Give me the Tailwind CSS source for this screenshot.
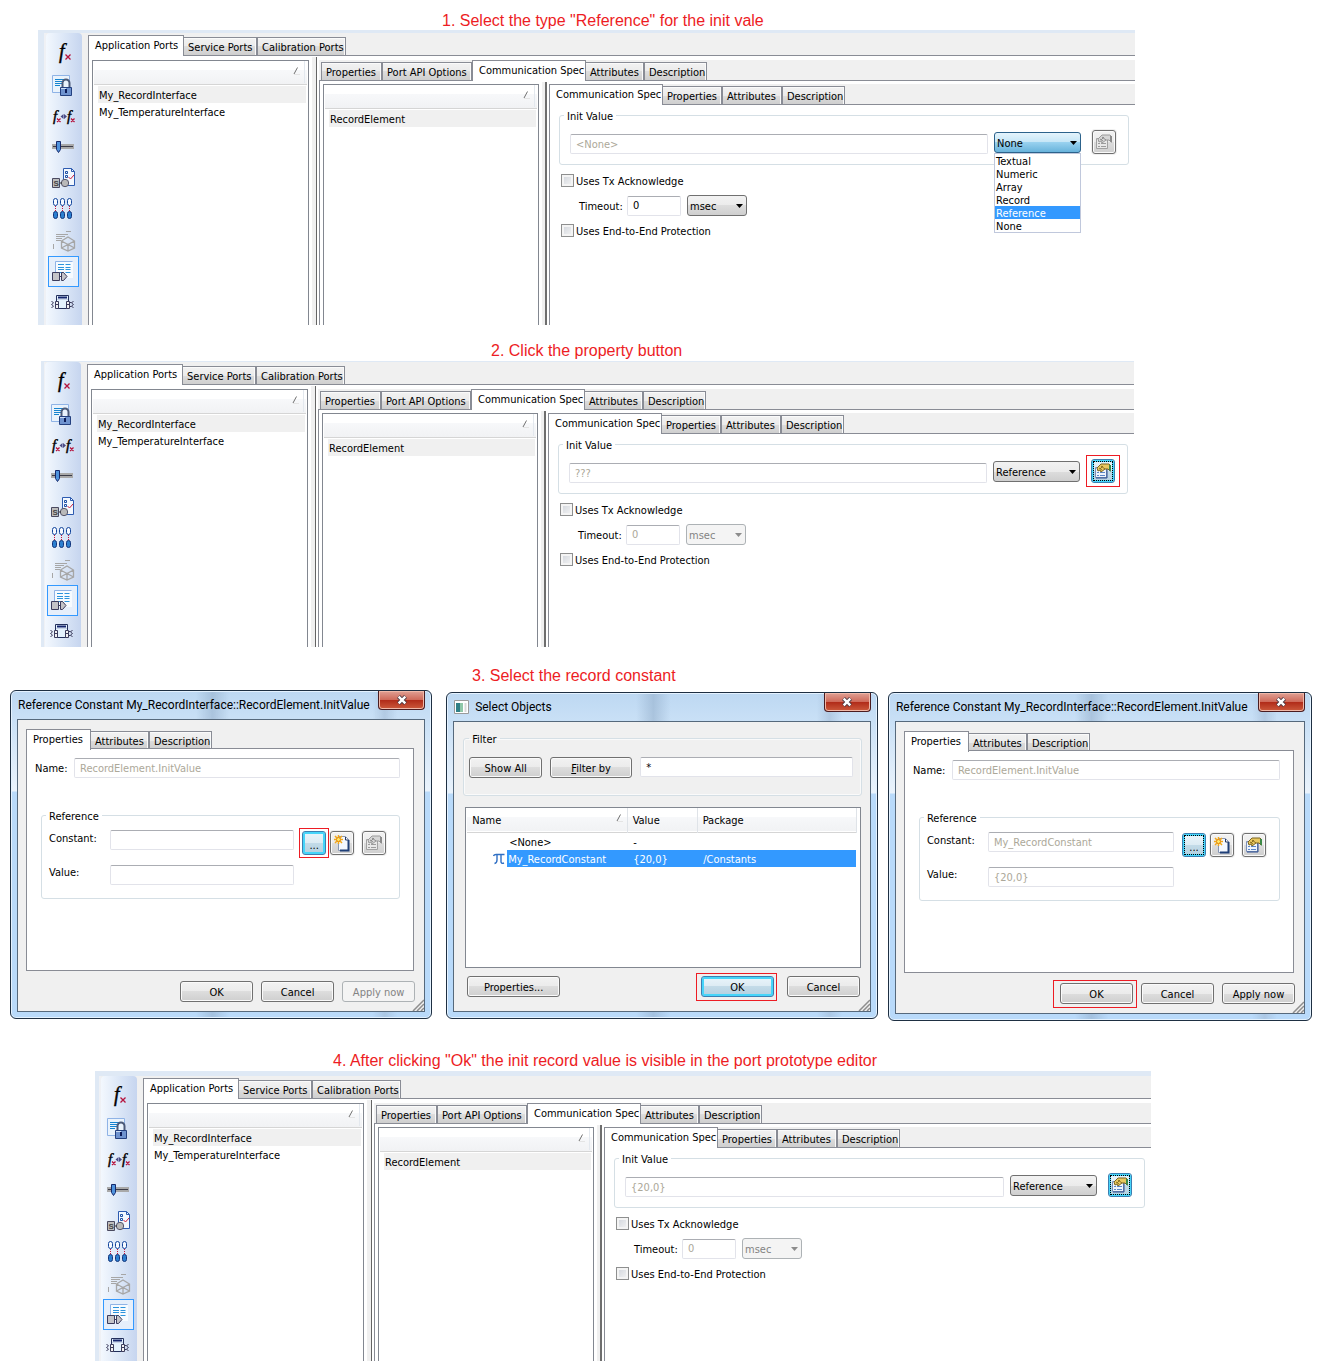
<!DOCTYPE html>
<html lang="en">
<head>
<meta charset="utf-8">
<meta name="viewport" content="width=device-width, initial-scale=1">
<title>Setting an init value with a record constant</title>
<script src="https://cdn.jsdelivr.net/npm/@tailwindcss/browser@4"></script>
</head>
<body class="bg-white text-black text-[11px] leading-[13px] font-['DejaVu_Sans_Condensed',Tahoma,sans-serif]">

<!-- Icon library -->
<svg class="hidden" aria-hidden="true">
  <symbol id="i-fx" viewBox="0 0 31 31">
    <text x="11" y="19" font-family="Liberation Serif, serif" font-style="italic" font-size="20" stroke="#000" stroke-width="0.4">f</text>
    <path d="M17.500 15.500l5 5M22.500 15.500l-5 5" stroke="#b5123c" stroke-width="1.300" fill="none"/>
  </symbol>
  <symbol id="i-lock" viewBox="0 0 31 31">
    <path d="M4.500 5.500h17v17h-17z" fill="#eaf3fc" stroke="#8fb3e6"/>
    <path d="M7 9.500h12M7 11.500h9M7 13.500h7M7 15.500h5" stroke="#1684cf"/>
    <path d="M14.500 17v-4a3.500 3.500 0 0 1 7 0v4" fill="none" stroke="#4c5a78" stroke-width="2"/>
    <path d="M12.500 17.500h11v8h-11z" fill="#6f93cf" stroke="#24407f"/>
    <path d="M13 18.500h5" stroke="#cfe0f6"/><path d="M17 19h2v4h-2z" fill="#0c1c58"/>
  </symbol>
  <symbol id="i-fxfx" viewBox="0 0 31 31">
    <text x="5" y="20" font-family="Liberation Serif, serif" font-style="italic" font-size="15" stroke="#000" stroke-width="0.4">f</text>
    <text x="19" y="20" font-family="Liberation Serif, serif" font-style="italic" font-size="15" stroke="#000" stroke-width="0.4">f</text>
    <path d="M9 17.500l3.500 3.500M12.500 17.500l-3.500 3.500M23 17.500l3.500 3.500M26.500 17.500l-3.500 3.500" stroke="#b5123c" stroke-width="1.300"/>
    <path d="M12.500 15.500l3-2.500v5zM19 15.500l-3-2.500v5z" fill="#4b4b86"/>
  </symbol>
  <symbol id="i-slider" viewBox="0 0 31 31">
    <path d="M4 12h22v5H4z" fill="#a9a9a9"/><path d="M5 14.500h20" stroke="#3c3c48"/>
    <path d="M8.500 9.500h4v8l-2 3-2-3z" fill="#4f93dd" stroke="#162a6c"/>
  </symbol>
  <symbol id="i-check" viewBox="0 0 31 31">
    <path d="M15.500 5.500h8l3 3v14h-11z" fill="#f3f8fe" stroke="#2d5bb0"/><path d="M23.500 5.500v3h3" fill="none" stroke="#2d5bb0"/>
    <path d="M17.500 8.500h2v2h-2zM17.500 12.500h2v2h-2z" fill="none" stroke="#1c4fa5"/>
    <path d="M20.500 14l2 2 3.500-4" fill="none" stroke="#d0213f"/>
    <circle cx="17" cy="20" r="3.700" fill="#b9b9b9" stroke="#55556a"/><path d="M12 20h2" stroke="#333"/>
    <path d="M4.500 15.500h7v9h-7z" fill="#bdbdbd" stroke="#4a4a60"/>
    <text x="5.500" y="23" font-family="Liberation Sans, sans-serif" font-weight="bold" font-size="8" fill="#444">S</text>
  </symbol>
  <symbol id="i-links" viewBox="0 0 31 31">
    <g fill="#f6faff" stroke="#12459c"><rect x="5.500" y="4.500" width="4" height="7" rx="2"/><rect x="12.500" y="4.500" width="4" height="7" rx="2"/><rect x="19.500" y="4.500" width="4" height="7" rx="2"/></g>
    <path d="M7.500 12v5M14.500 12v5M21.500 12v5" stroke="#c4143c" stroke-dasharray="1 1"/>
    <g fill="#2b7fd0" stroke="#12357c"><rect x="5.500" y="17.500" width="4" height="7" rx="2"/><rect x="12.500" y="17.500" width="4" height="7" rx="2"/><rect x="19.500" y="17.500" width="4" height="7" rx="2"/></g>
  </symbol>
  <symbol id="i-cube" viewBox="0 0 31 31">
    <g fill="none" stroke="#a6a6a6"><path d="M18 6.500h5M8 9.500h12M8 11.500h9M8 13.500h6M8 15.500h5M5.500 19v5"/>
    <path d="M13.500 16l6.500-4 6.500 4v7l-6.500 3-6.500-3zM13.500 16l6.500 3.500 6.500-3.500M20 19.500v7M13.500 23l6.500-3.500 6.500 3.500" stroke-width="1.300"/></g>
  </symbol>
  <symbol id="i-ports" viewBox="0 0 31 31">
    <path d="M7.500 22.500v-17h17" fill="none" stroke="#8fb3e6"/><path d="M8 6h17v16H8z" fill="#f7fbff"/>
    <path d="M10 8.500h6M17.500 8.500h5M10 11.500h6M17.500 11.500h5M10 13.500h6M17.500 13.500h5M10 16.500h6M17.500 16.500h5" stroke="#2c93dc"/>
    <path d="M4.500 16.500h7v8h-7z" fill="#c4c4c8" stroke="#3c3c5c"/><path d="M12 20.500h2" stroke="#3c3c5c"/>
    <path d="M13.500 16.500h2l3.500 4-3.500 4h-2z" fill="#c4c4c8" stroke="#3c3c5c"/>
  </symbol>
  <symbol id="i-module" viewBox="0 0 31 31">
    <path d="M8.500 8.500h12v13h-12z" fill="#e4f2fd" stroke="#23305c"/><path d="M10 10.500h9" stroke="#16266e" stroke-width="2"/><path d="M9 12.500h11" stroke="#c8d4e8"/>
    <path d="M7.500 14.500h3v7h-3zM18.500 14.500h3v7h-3zM7.500 17.500h3M18.500 17.500h3" fill="#f2f2f2" stroke="#3c3c5c"/>
    <path d="M3.500 14l2 2-2 1.500 2 1.500-2 2M25.500 14l-2 2 2 1.500-2 1.500 2 2M22 15.500h1.500M22 19.500h1.500" fill="none" stroke="#3c3c5c"/>
  </symbol>
  <symbol id="i-prop" viewBox="0 0 24 24">
    <path d="M4.500 8.500h11v10h-11z" fill="#eef4fc" stroke="#7a8fb8"/><path d="M16 10v9H5" fill="none" stroke="#2f4f8f"/>
    <path d="M6 13.500h2M9 13.500h5M6 16.500h2M9 16.500h5" stroke="#5b87c8"/>
    <path d="M6 9l4-4h8l1 1v6l-2-2h-3l-4 3-1-2-2 1z" fill="#e8c860" stroke="#7b6420"/><path d="M8 9l3 2M10 7l4 3M9 10l3-3" stroke="#8a6f20"/>
    <path d="M18 6h2v7l-2-2z" fill="#3c8a48"/>
  </symbol>
  <symbol id="i-prop-off" viewBox="0 0 24 24">
    <path d="M4.500 8.500h11v10h-11z" fill="#e8e8e8" stroke="#a2a2a2"/>
    <path d="M6 13.500h2M9 13.500h5M6 16.500h2M9 16.500h5" stroke="#9c9c9c"/>
    <path d="M6 9l4-4h8l1 1v6l-2-2h-3l-4 3-1-2-2 1z" fill="#d6d6d6" stroke="#9a9a9a"/><path d="M8 9l3 2M10 7l4 3M9 10l3-3" stroke="#8c8c8c"/>
    <path d="M18 6h2v7l-2-2z" fill="#8c8c8c"/>
  </symbol>
  <symbol id="i-new" viewBox="0 0 24 24">
    <path d="M8.500 5.500h7l3 3v11h-10z" fill="#f4f8ff" stroke="#8796b4"/><path d="M15.500 6v3h3" fill="none" stroke="#24375f"/><path d="M18.500 9v10.500H10" fill="none" stroke="#1f3f78" stroke-width="2"/>
    <path d="M8.500 4v9M4 8.500h9M5 5l7 7M12 5l-7 7" stroke="#f2a81a" stroke-width="1.500"/><circle cx="8.500" cy="8.500" r="2" fill="#ffe868" stroke="#e58a10"/>
  </symbol>
  <symbol id="i-close" viewBox="0 0 12 10">
    <path d="M2.500 1.500l7 7M9.500 1.500l-7 7" stroke="#4a3a44" stroke-width="4.200" fill="none"/><path d="M2.700 1.700l6.600 6.600M9.300 1.700l-6.600 6.600" stroke="#fff" stroke-width="2.400" fill="none"/>
  </symbol>
  <symbol id="i-sort" viewBox="0 0 8 8"><path d="M1 7L4.500 0.500" stroke="#707070" fill="none"/><path d="M1 7.500h6" stroke="#e4e4e4"/></symbol>
  <symbol id="i-down" viewBox="0 0 7 4"><path d="M0 0h7L3.500 4z" fill="currentColor"/></symbol>
  <symbol id="i-pi" viewBox="0 0 12 12"><path d="M0.500 3Q1 1.500 3 1.500h8.500M4 2v5q0 3-2.500 3.500M8 2v7q0.500 2 3 1" fill="none" stroke="#2f6fc4" stroke-width="1.400"/></symbol>
  <symbol id="i-grip" viewBox="0 0 12 12"><path d="M1 12L12 1M5 12l7-7M9 12l3-3" stroke="#8e8e8e" stroke-width="1.500"/></symbol>
  <symbol id="i-window" viewBox="0 0 15 14"><path d="M0.500 0.500h14v13H0.500z" fill="#fff" stroke="#9a9a9a"/><path d="M2 3h4v9H2z" fill="#2f7f86"/><path d="M6 3h3v9H6z" fill="#8fc7a8"/><path d="M10.500 3h2v9h-2z" fill="#d8d8d8"/></symbol>
</svg>

<main id="guide" class="flex flex-col"></main>

<script>
const icon = (name, cls) => `<svg class="${cls}" aria-hidden="true"><use href="#${name}"/></svg>`;

const BTN = "h-[21px] rounded-[3px] border border-[#707070] bg-[linear-gradient(to_bottom,#f2f2f2,#ebebeb_50%,#dddddd_50%,#cfcfcf)] pt-[2px] shadow-[inset_0_0_0_1px_#fafafa]";
const BTN_OFF = "h-[21px] rounded-[3px] border border-[#adb2b5] bg-[#f4f4f4] pt-[2px] text-[#838383]";
const BTN_MAIN = "h-[21px] rounded-[3px] border border-[#3c7fb1] bg-[linear-gradient(to_bottom,#eaf5fb,#dcebf3_50%,#c3dbe8_50%,#b3d0e0)] pt-[2px] shadow-[inset_0_0_0_2px_#46d5fa]";
const TOOL = "relative flex size-6 shrink-0 items-center justify-center rounded-[3px] border border-[#707070] bg-[linear-gradient(to_bottom,#f2f2f2,#ebebeb_50%,#dddddd_50%,#cfcfcf)] shadow-[inset_0_0_0_1px_#fafafa,0_0_0_1px_#f0f0f0]";
const TOOL_MAIN = "relative flex size-6 shrink-0 items-center justify-center rounded-[3px] border border-[#3c7fb1] bg-[linear-gradient(to_bottom,#eaf5fb,#dcebf3_50%,#c3dbe8_50%,#b3d0e0)] shadow-[inset_0_0_0_2px_#46d5fa]";
const FOCUS = '<span class="absolute inset-[1px] border border-dotted border-black"></span>';
const FIELD = "h-5 min-w-0 rounded-[2px] border border-[#e2e3ea] border-t-[#abadb3] bg-white px-[5px] disabled:text-[#aca899]";
const CHECK = "size-[13px] appearance-none border border-[#8e8f8f] bg-[linear-gradient(135deg,#cfd3da,#f6f6f6)] shadow-[inset_0_0_0_2px_#f4f4f4]";

const tabs = (list, active) => list.map(([label, w], i) => i === active
  ? `<button role="tab" aria-selected="true" class="z-1 -mb-px h-[21px] ${w} shrink-0 border border-b-0 border-[#898c95] bg-white pb-px pl-[6px] text-left whitespace-nowrap">${label}</button>`
  : `<button role="tab" aria-selected="false" class="h-[18px] ${w} shrink-0 border border-b-0 ${i === active + 1 ? "border-l-0" : ""} border-[#898c95] bg-[linear-gradient(to_bottom,#f2f2f2,#ebebeb_50%,#dddddd_50%,#cfcfcf)] pt-[2px] pl-[4px] text-left whitespace-nowrap shadow-[inset_-1px_1px_0_0_#fafafa]">${label}</button>`).join("");

const picker = (id, label, w, value, o = {}) => `
  <div class="relative ${w} shrink-0">
    <select id="${id}" aria-label="${label}" ${o.off ? "disabled" : ""} class="block h-[21px] w-full appearance-none rounded-[3px] border px-[2px] pt-px ${o.off ? "border-[#adb2b5] bg-[#f4f4f4] text-[#838383]" : o.open ? "border-[#2c628b] bg-[linear-gradient(to_bottom,#e5f4fc,#c4e5f6_50%,#98d1ef_50%,#68b3db)]" : "border-[#707070] bg-[linear-gradient(to_bottom,#f2f2f2,#ebebeb_50%,#dddddd_50%,#cfcfcf)]"}"><option>${value}</option></select>
    ${icon("i-down", o.off ? "pointer-events-none absolute top-[9px] right-[4px] h-1 w-[7px] text-[#8c8c8c]" : "pointer-events-none absolute top-[9px] right-[4px] h-1 w-[7px] text-black")}
    ${o.open ? `<ul role="listbox" class="absolute top-full left-0 z-10 w-full border border-[#c0c8dc] bg-white leading-[15px]">${["Textual", "Numeric", "Array", "Record", "Reference", "None"].map(t =>
      `<li role="option" class="h-[13px] pl-px ${t === "Reference" ? "bg-[#3399ff] text-white" : ""}">${t}</li>`).join("")}</ul>` : ""}
  </div>`;

const listBox = (w, rows) => `
  <div class="${w} shrink-0 border border-b-0 border-[#828790] bg-white px-px">
    <div class="flex h-6 items-start justify-end border-b border-[#d5d5d5] bg-[linear-gradient(to_bottom,#ffffff_40%,#f7f8fa_40%,#f1f2f4)] pr-[2px]">
      ${icon("i-sort", "mt-[6px] mr-[3px] size-2")}<span class="h-[22px] w-px bg-[#e3e8ee]"></span>
    </div>
    <ul class="pt-px pr-px pl-[4px]">${rows.map((r, i) => `<li class="h-[17px] pt-[3px] pl-px ${i === 0 ? "bg-[#f0f0f0]" : ""}">${r}</li>`).join("")}</ul>
  </div>`;

const editor = o => `
<section class="flex ${o.box} border-[#dfe9f5] bg-[#f0f0f0]">
  <div class="${o.edge} shrink-0 bg-[linear-gradient(to_right,#dfe9f5_70%,#eff1f5_70%)]"></div>
  <nav class="flex w-9 shrink-0 flex-col rounded-t-[4px] bg-[linear-gradient(to_right,#f3f8fe,#dce7f7_50%,#c6d5ef)] pt-[6px] pl-[2px]">
    ${["fx", "lock", "fxfx", "slider", "check", "links", "cube", "ports", "module"].map(n =>
      `<button aria-label="${n}" class="size-[31px] ${n === "ports" ? "border border-[#3399ff] bg-[#e6effb]" : "border border-transparent"}">${icon("i-" + n, "-m-px size-[31px]")}</button>`).join("")}
  </nav>
  <div class="w-[6px] shrink-0"></div>
  <div class="flex min-w-0 flex-1 flex-col">
    <div role="tablist" class="flex h-[23px] items-end border-b border-[#898c95]">${tabs([["Application Ports", "w-24"], ["Service Ports", "w-[73px]"], ["Calibration Ports", "w-[89px]"]], 0)}</div>
    <div class="flex flex-1 border-l border-[#898c95] bg-white pt-px pl-[3px]">
      <div class="flex pt-[3px]">${listBox("w-[217px]", ["My_RecordInterface", "My_TemperatureInterface"])}</div>
      <div class="ml-[3px] w-[5px] shrink-0 border-r border-[#646464] bg-[#f0f0f0]"></div>
      <div class="flex min-w-0 flex-1 flex-col pt-[3px]">
        <div role="tablist" class="ml-[2px] flex h-[21px] items-end border-b border-[#898c95] bg-[#f0f0f0] pl-[2px]">${tabs([["Properties", "w-[61px]"], ["Port API Options", "w-[90px]"], ["Communication Spec", "w-[114px]"], ["Attributes", "w-[58px]"], ["Description", "w-[63px]"]], 2)}</div>
        <div class="ml-[2px] flex flex-1 border-l border-[#898c95] pt-px pl-[3px]">
          <div class="flex pt-[2px]">${listBox("w-[216px]", ["RecordElement"])}</div>
          <div class="ml-[3px] w-[5px] shrink-0 border-r-2 border-[#6e6e6e] bg-[#f0f0f0]"></div>
          <div class="flex min-w-0 flex-1 flex-col pt-[2px] pl-[2px]">
            <div role="tablist" class="flex h-[21px] items-end border-b border-[#898c95] bg-[#f0f0f0]">${tabs([["Communication Spec", "w-[114px]"], ["Properties", "w-[59px]"], ["Attributes", "w-[60px]"], ["Description", "w-[63px]"]], 0)}</div>
            <div class="flex-1 border-l border-[#898c95] pt-1 pr-[6px] pl-[9px]">
              <fieldset class="rounded-[3px] border border-[#d5dfe5] px-[10px] pb-[10px]">
                <legend class="-ml-[6px] h-[13px] px-[3px] leading-[15px]">Init Value</legend>
                <div class="flex items-start pt-2 pr-[2px]">
                  <input type="text" disabled aria-label="Init Value" value="${o.value}" class="${FIELD} mt-1 flex-1">
                  <div class="mt-0.5 mr-[11px] ml-[6px] shrink-0">${picker(o.id + "-type", "Init value type", "w-[87px]", o.type, { open: o.open })}</div>
                  <div class="relative shrink-0">
                    <button aria-label="Edit properties" class="${o.off ? TOOL : TOOL_MAIN}">${icon(o.off ? "i-prop-off" : "i-prop", "size-6 shrink-0")}${o.off ? "" : FOCUS}</button>
                    ${o.mark ? '<span class="pointer-events-none absolute -inset-x-[5px] -inset-y-[4px] border border-[#ed1c24]"></span>' : ""}
                  </div>
                </div>
              </fieldset>
              <div class="mt-[9px] flex h-[13px] items-center gap-[2px] pl-[2px]">
                <input id="${o.id}-ack" type="checkbox" class="${CHECK}"><label for="${o.id}-ack" class="pt-[2px]">Uses Tx Acknowledge</label>
              </div>
              <div class="mt-2 flex items-center pl-5">
                <label for="${o.id}-time" class="w-12 pt-[2px]">Timeout:</label>
                <input id="${o.id}-time" type="text" value="0" ${o.open ? "" : "disabled"} class="${FIELD} mr-[6px] w-[54px]">
                ${picker(o.id + "-unit", "Timeout unit", "w-[60px]", "msec", { off: !o.open })}
              </div>
              <div class="mt-2 flex h-[13px] items-center gap-[2px] pl-[2px]">
                <input id="${o.id}-e2e" type="checkbox" class="${CHECK}"><label for="${o.id}-e2e" class="pt-[2px]">Uses End-to-End Protection</label>
              </div>
            </div>
          </div>
        </div>
      </div>
    </div>
  </div>
</section>`;

const dialog = (cls, title, glyph, body) => `
<section role="dialog" aria-label="${title}" class="flex min-w-0 flex-col rounded-[6px] border border-[#1e2f42] px-[6px] pb-[6px] shadow-[inset_0_0_0_1px_#e4f2ff] bg-[linear-gradient(to_right,transparent_44%,#8ea9c680_48%,transparent_52%,transparent_86%,#9db5d080_89%,transparent_92%),linear-gradient(to_bottom,#bdd8f2,#c9e0f6_28px,#eaf3fc_100px,#b9dafa_101px)] ${cls}">
  <header class="flex h-7 shrink-0 items-start">
    ${glyph}<h2 class="min-w-0 flex-1 pt-[6px] text-[12px] leading-4 whitespace-nowrap font-[Roboto,'Open_Sans',sans-serif]">${title}</h2>
    <button aria-label="Close" class="flex h-[19px] w-[47px] shrink-0 items-center justify-center rounded-b-[4px] border border-t-0 border-[#4a1c20] bg-[linear-gradient(to_bottom,#e0a195,#cf6a5a_48%,#b02a18_50%,#cc5a3c)] shadow-[inset_0_0_0_1px_#f0b8a8]">${icon("i-close", "h-[10px] w-3")}</button>
  </header>
  <div class="relative flex flex-1 flex-col border border-[#56697c] bg-[#f0f0f0]">${body}${icon("i-grip", "absolute right-0 bottom-0 size-3")}</div>
</section>`;

const markedOk = (cls, frame) => `<div class="relative"><button class="${cls} w-[73px]">OK</button><span class="pointer-events-none absolute -top-[3px] -bottom-[4px] ${frame} border border-[#ed1c24]"></span></div>`;

const reference = o => dialog(o.box, "Reference Constant My_RecordInterface::RecordElement.InitValue", '<span class="w-px"></span>', `
  <div class="flex flex-1 flex-col pt-2 pr-[9px] pb-[9px] pl-2">
    <div role="tablist" class="mr-px flex h-[21px] items-end">${tabs([["Properties", "w-[65px]"], ["Attributes", "w-[58px]"], ["Description", "w-[63px]"]], 0)}</div>
    <div class="-mt-px mr-px flex-1 border border-[#898c95] bg-white pt-[9px] pr-[13px] pl-2">
      <div class="flex items-center"><label for="${o.id}-name" class="w-[39px]">Name:</label><input id="${o.id}-name" disabled type="text" value="RecordElement.InitValue" class="${FIELD} flex-1"></div>
      <fieldset class="mt-[31px] ml-[6px] rounded-[3px] border border-[#d5dfe5] pr-[13px] pb-[13px] pl-[7px]">
        <legend class="-ml-[3px] h-[13px] px-[3px] leading-[15px]">Reference</legend>
        <div class="grid grid-cols-[61px_minmax(0,1fr)_auto] items-start gap-y-[10px] pt-2">
          <label for="${o.id}-const" class="pt-[2px]">Constant:</label><input id="${o.id}-const" disabled type="text" value="${o.constant}" class="${FIELD}">
          <div class="ml-2 flex pt-px">
            <div class="relative"><button aria-label="Browse" class="${TOOL_MAIN} pt-1">...${o.mark ? "" : FOCUS}</button>${o.mark ? '<span class="pointer-events-none absolute -inset-[3px] border border-[#ed1c24]"></span>' : ""}</div>
            <button aria-label="New constant" class="${TOOL} ml-1">${icon("i-new", "size-6 shrink-0")}</button>
            <button aria-label="Edit properties" class="${TOOL} ml-2">${icon(o.mark ? "i-prop-off" : "i-prop", "size-6 shrink-0")}</button>
          </div>
          <label for="${o.id}-value" class="pt-px">Value:</label><input id="${o.id}-value" disabled type="text" value="${o.value}" class="${FIELD}"><span></span>
        </div>
      </fieldset>
    </div>
    <div class="mt-[10px] flex justify-end gap-2">
      ${o.mark ? `<button class="${BTN} w-[73px]">OK</button>` : markedOk(BTN, "-left-[7px] -right-[4px]")}
      <button class="${BTN} w-[73px]">Cancel</button><button ${o.mark ? "disabled" : ""} class="${o.mark ? BTN_OFF : BTN} w-[73px]">Apply now</button>
    </div>
  </div>`);

const selectObjects = dialog("mt-0.5 mr-[10px] ml-[14px] min-h-[327px] flex-[432_1_0%]", "Select Objects", icon("i-window", "mt-[7px] mr-[6px] ml-px h-[14px] w-[15px]"), `
  <div class="flex flex-1 flex-col pt-[10px] pr-2 pb-[14px] pl-[9px]">
    <fieldset class="rounded-[3px] border border-[#d5dfe5] pr-2 pb-[17px] pl-[5px] shadow-[inset_0_0_0_1px_#fafafa]">
      <legend class="h-[13px] px-[3px] leading-[15px]">Filter</legend>
      <div class="flex items-start gap-2 pt-3"><button class="${BTN} w-[73px]">Show All</button><button class="${BTN} w-[82px]"><u>F</u>ilter by</button><input aria-label="Filter pattern" type="text" value="*" class="${FIELD} flex-1"></div>
    </fieldset>
    <div class="mt-[11px] mr-px ml-[2px] flex-1 border border-[#828790] bg-white pr-[3px] pl-px">
      <table class="w-full table-fixed border-collapse text-left">
        <colgroup><col class="w-10"><col class="w-[120px]"><col class="w-[70px]"><col></colgroup>
        <thead><tr class="h-6 border-b border-[#d5d5d5] bg-[linear-gradient(to_bottom,#ffffff_40%,#f7f8fa_40%,#f1f2f4)]">
          <th colspan="2" class="border-r border-[#dfe3e8] p-0 pt-[2px] pl-[5px] font-normal"><div class="flex items-center justify-between pr-[3px]">Name${icon("i-sort", "-mt-[6px] size-2")}</div></th><th class="border-r border-[#dfe3e8] p-0 pt-[2px] pl-[5px] font-normal">Value</th><th class="border-r border-[#dfe3e8] p-0 pt-[2px] pl-[5px] font-normal">Package</th></tr></thead>
        <tbody>
          <tr class="h-[18px]"><td class="p-0"></td><td class="p-0 pt-[2px] pl-[2px]">&lt;None&gt;</td><td class="p-0 pt-[2px] pl-[6px]">-</td><td class="p-0"></td></tr>
          <tr class="h-[17px]"><td class="p-0"><div class="flex justify-end pr-[2px]">${icon("i-pi", "size-3")}</div></td><td class="bg-[#3399ff] p-0 pt-[2px] pl-px text-white">My_RecordConstant</td><td class="bg-[#3399ff] p-0 pt-[2px] pl-[6px] text-white">{20,0}</td><td class="bg-[#3399ff] p-0 pt-[2px] pl-[6px] text-white">/Constants</td></tr>
        </tbody>
      </table>
    </div>
    <div class="mt-2 mr-[2px] ml-[4px] flex"><button class="${BTN} mr-auto w-[93px]">Properties...</button>${markedOk(BTN_MAIN, "-left-[5px] -right-[3px]")}<button class="${BTN} ml-[13px] w-[73px]">Cancel</button></div>
  </div>`);

const caption = (cls, text) => `<h1 class="${cls} text-[16px] leading-5 whitespace-nowrap text-[#ed1c24] font-['Liberation_Sans',Arial,sans-serif]">${text}</h1>`;

document.getElementById("guide").innerHTML =
  caption("h-[30px] pt-[11px] pl-[442px]", '1. Select the type "Reference" for the init vale') +
  editor({ id: "p1", box: "mr-[184px] ml-[38px] min-h-[295px] border-t-3", edge: "w-2", value: "&lt;None&gt;", type: "None", open: true, off: true }) +
  caption("pt-4 pl-[491px]", "2. Click the property button") +
  editor({ id: "p2", box: "mr-[185px] ml-[41px] min-h-[285px] border-t", edge: "w-1", value: "???", type: "Reference", mark: true }) +
  caption("pt-[19px] pb-1 pl-[472px]", "3. Select the record constant") +
  `<div class="flex items-start pr-[7px] pl-[10px]">${
    reference({ id: "d1", box: "min-h-[329px] flex-[422_1_0%]", constant: "", value: "", mark: true })}${
    selectObjects}${
    reference({ id: "d2", box: "mt-0.5 min-h-[329px] flex-[424_1_0%]", constant: "My_RecordConstant", value: "{20,0}" })}</div>` +
  caption("pt-[30px] pl-[333px]", '4. After clicking "Ok" the init record value is visible in the port prototype editor') +
  editor({ id: "p4", box: "mr-[168px] ml-[95px] min-h-[290px] border-t-5", edge: "w-[6px]", value: "{20,0}", type: "Reference" });
</script>
</body>
</html>
